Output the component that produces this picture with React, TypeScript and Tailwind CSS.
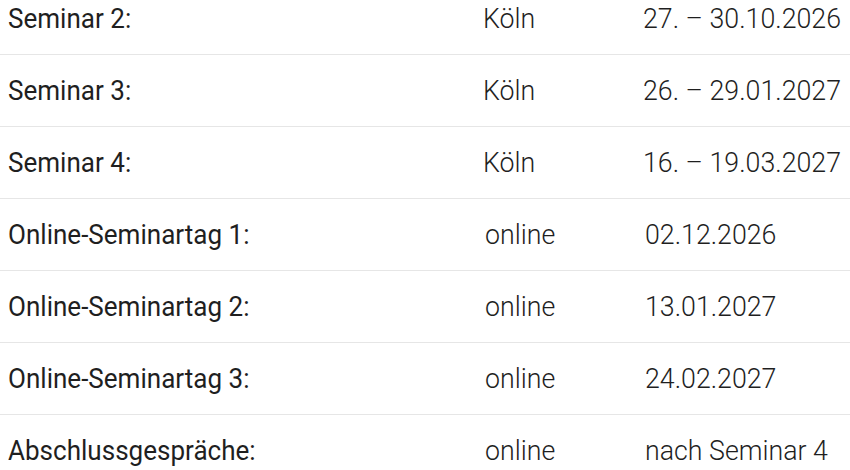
import React from "react";

const rows = [
  ["Seminar 2:", "Köln", "27. – 30.10.2026"],
  ["Seminar 3:", "Köln", "26. – 29.01.2027"],
  ["Seminar 4:", "Köln", "16. – 19.03.2027"],
  ["Online-Seminartag 1:", "online", "02.12.2026"],
  ["Online-Seminartag 2:", "online", "13.01.2027"],
  ["Online-Seminartag 3:", "online", "24.02.2027"],
  ["Abschlussgespräche:", "online", "nach Seminar 4"],
];

export default function App() {
  return (
    <div className="w-[850px] h-[470px] overflow-hidden bg-white text-[#1f1f1f] font-['Roboto',sans-serif]">
      <div className="-mt-[17px]">
        {rows.map((r, i) => (
          <div
            key={i}
            className={`flex items-center h-[72px] ${i < rows.length - 1 ? "border-b border-[#e6e6e6]" : ""}`}
          >
            <div className="w-[485px] pl-[8px] text-[28px] font-normal whitespace-nowrap">
              <span className="inline-block origin-left scale-x-[0.93]">{r[0]}</span>
            </div>
            <div className="w-[160px] text-[28px] font-light whitespace-nowrap">
              <span className="inline-block origin-left scale-x-[0.955]">{r[1]}</span>
            </div>
            <div className="flex-1 text-[28px] font-light whitespace-nowrap">
              <span className="inline-block origin-left scale-x-[0.955]">{r[2]}</span>
            </div>
          </div>
        ))}
      </div>
    </div>
  );
}
